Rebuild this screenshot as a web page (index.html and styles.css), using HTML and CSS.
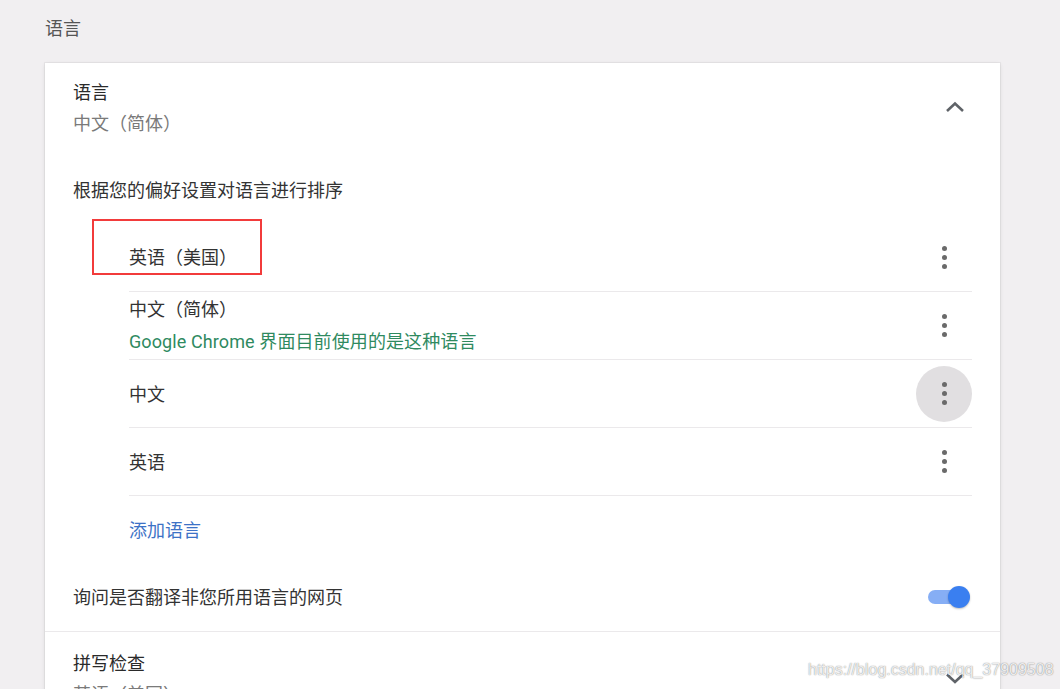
FILE: index.html
```html
<!DOCTYPE html>
<html lang="zh-CN">
<head>
<meta charset="utf-8">
<title>语言</title>
<link rel="stylesheet" href="styles.css">
</head>
<body>
<div class="page">
  <h2 class="page-title">语言</h2>
  <div class="card">
    <div class="expander">
      <div class="expander-text">
        <div class="title">语言</div>
        <div class="subtitle">中文（简体）</div>
      </div>
      <svg class="chevron" width="24" height="24" viewBox="0 0 24 24"><polyline points="4,16 12,8.5 20,16" fill="none" stroke="#5f6368" stroke-width="2.6"/></svg>
    </div>
    <div class="sort-label">根据您的偏好设置对语言进行排序</div>
    <div class="lang-list">
      <div class="lang-row">
        <span class="highlight"></span>
        <div class="lang-name">英语（美国）</div>
        <div class="more"><span class="dot"></span><span class="dot"></span><span class="dot"></span></div>
      </div>
      <div class="lang-row">
        <div class="lang-text">
          <div class="lang-name two">中文（简体）</div>
          <div class="lang-note">Google Chrome 界面目前使用的是这种语言</div>
        </div>
        <div class="more"><span class="dot"></span><span class="dot"></span><span class="dot"></span></div>
      </div>
      <div class="lang-row">
        <div class="lang-name">中文</div>
        <div class="more active"><span class="dot"></span><span class="dot"></span><span class="dot"></span></div>
      </div>
      <div class="lang-row">
        <div class="lang-name">英语</div>
        <div class="more"><span class="dot"></span><span class="dot"></span><span class="dot"></span></div>
      </div>
      <div class="add-row"><a class="add-link">添加语言</a></div>
    </div>
    <div class="toggle-row">
      <div class="toggle-label">询问是否翻译非您所用语言的网页</div>
      <div class="toggle"><span class="track"></span><span class="knob"></span></div>
    </div>
    <div class="expander spell">
      <div class="expander-text">
        <div class="title">拼写检查</div>
        <div class="subtitle">英语（美国）</div>
      </div>
      <svg class="chevron" width="24" height="24" viewBox="0 0 24 24"><polyline points="4,8.5 12,16 20,8.5" fill="none" stroke="#5f6368" stroke-width="2.6"/></svg>
    </div>
  </div>
</div>
<div class="watermark">https://blog.csdn.net/qq_37909508</div>
</body>
</html>
```
FILE: styles.css
```css
html, body {
  margin: 0;
  padding: 0;
  background: #f1eff1;
  font-family: "Noto Sans CJK SC", "Noto Sans", sans-serif;
  color: #333333;
  font-size: 18px;
  overflow: hidden;
}
.page {
  padding: 12px 0 0 45px;
  width: 955px;
}
.page-title {
  margin: 0;
  font-size: 18px;
  font-weight: normal;
  line-height: 30px;
  color: #555;
}
.card {
  margin-top: 21px;
  background: #fff;
  box-shadow: 0 0 0 1px rgba(0,0,0,0.04), 0 1px 4px rgba(0,0,0,0.10);
}
.expander {
  display: flex;
  align-items: center;
  justify-content: space-between;
  padding: 13px 33px 0 28px;
}
.title, .subtitle {
  line-height: 31px;
}
.title { color: #2a2a2a; }
.subtitle { color: #7a7a7a; }
.chevron { display: block; }
.sort-label {
  padding: 36px 28px 19px;
  line-height: 30px;
}
.lang-list {
  margin: 0 28px 0 84px;
}
.lang-row {
  position: relative;
  display: flex;
  align-items: center;
  justify-content: space-between;
  height: 68px;
  box-sizing: border-box;
}
.lang-row + .lang-row, .add-row {
  border-top: 1px solid #ebe9eb;
}
.lang-name { line-height: 30px; padding-bottom: 2px; }
.lang-name.two { line-height: 33px; padding-bottom: 0; }
.lang-note { line-height: 33px; }
.lang-note {
  color: #2f8a5f;
  font-family: Roboto, "Noto Sans CJK SC", sans-serif;
  letter-spacing: 0.1px;
}
.lang-text { padding-bottom: 2px; }
.highlight {
  position: absolute;
  left: -37px;
  top: -4px;
  width: 166px;
  height: 52px;
  border: 2px solid #f23b3b;
}
.more {
  width: 56px;
  height: 56px;
  border-radius: 50%;
  display: flex;
  flex-direction: column;
  align-items: center;
  justify-content: center;
  gap: 4px;
}
.more.active { background: #e1dfe1; }
.dot {
  width: 5px;
  height: 5px;
  border-radius: 50%;
  background: #6a6a6a;
}
.add-row {
  height: 67px;
  display: flex;
  align-items: center;
}
.add-link {
  color: #3d72c6;
  line-height: 30px;
  padding-bottom: 2px;
}
.toggle-row {
  display: flex;
  align-items: center;
  justify-content: space-between;
  height: 68px;
  padding: 0 30px 0 28px;
  border-bottom: 1px solid #ebe9eb;
}
.toggle-label { padding-bottom: 2px; }
.toggle {
  position: relative;
  width: 42px;
  height: 22px;
}
.track {
  position: absolute;
  left: 0;
  top: 4px;
  width: 38px;
  height: 14px;
  border-radius: 7px;
  background: #86aef5;
}
.knob {
  position: absolute;
  right: 0;
  top: 0;
  width: 22px;
  height: 22px;
  border-radius: 50%;
  background: #3a7ff0;
  box-shadow: 0 1px 2px rgba(0,0,0,0.25);
}
.spell {
  padding-top: 15px;
}
.watermark {
  position: absolute;
  left: 808px;
  top: 660px;
  font-family: "Liberation Sans", Arial, sans-serif;
  font-size: 16px;
  line-height: 20px;
  color: rgba(255,255,255,0.85);
  text-shadow: 0 0 1px rgba(0,0,0,0.45), 0 0 2px rgba(0,0,0,0.15);
}
```
